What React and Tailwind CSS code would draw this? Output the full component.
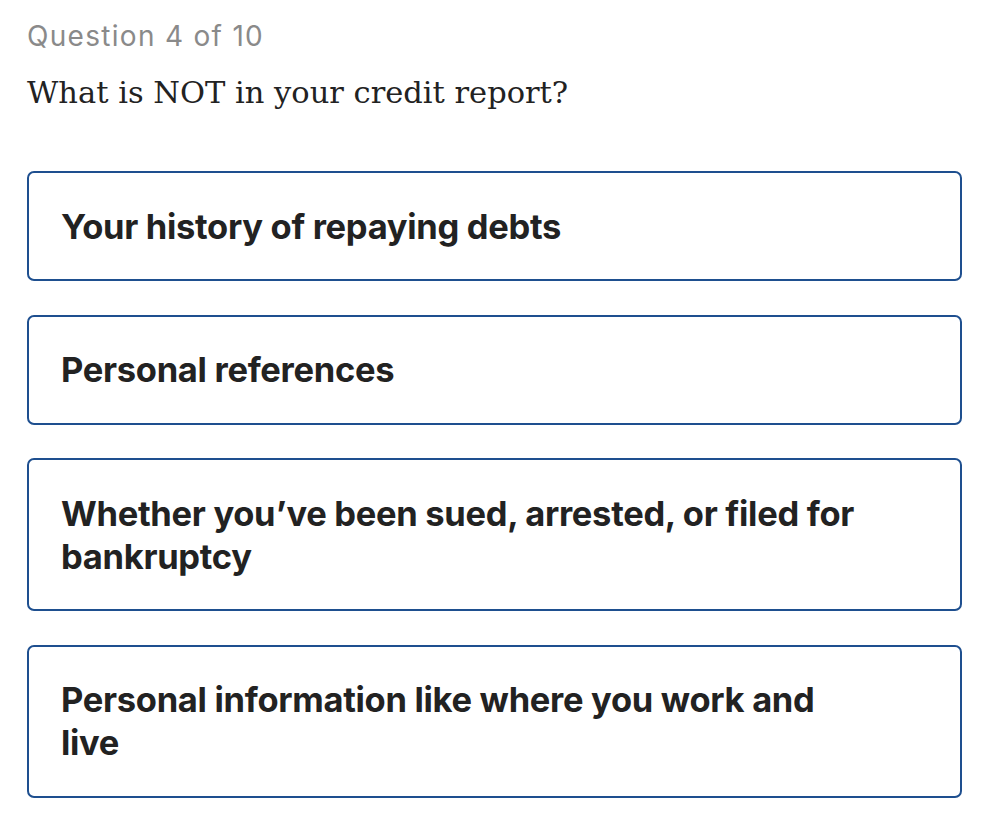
import React from 'react';

const options = [
    'Your history of repaying debts',
    'Personal references',
    'Whether you’ve been sued, arrested, or filed for bankruptcy',
    'Personal information like where you work and live',
];

function App() {
    return (
        <div className="min-h-screen bg-white px-[27px] pt-[17px]">
            {/* Заголовок вопроса */}
            <div className="text-[28px] leading-[38px] text-[#8a8a8a] font-['Inter',sans-serif] tracking-[1.3px]">
                Question 4 of 10
            </div>
            <h1 className="mt-[16px] text-[30.5px] leading-[44px] text-[#222222] font-['DejaVu_Serif',serif]">
                What is NOT in your credit report?
            </h1>

            {/* Варианты ответа */}
            <div className="mt-[56px] flex flex-col gap-[33.5px] w-[935px]">
                {options.map((text) => (
                    <button
                        key={text}
                        className="text-left border-2 border-[#1e4f8f] rounded-[7px] px-8 py-[31.5px] bg-white"
                    >
                        <span className="block max-w-[804px] text-[34.5px] leading-[43px] font-bold text-[#222222] font-['Inter',sans-serif] tracking-[-0.3px]">
                            {text}
                        </span>
                    </button>
                ))}
            </div>
        </div>
    );
}

export default App;
